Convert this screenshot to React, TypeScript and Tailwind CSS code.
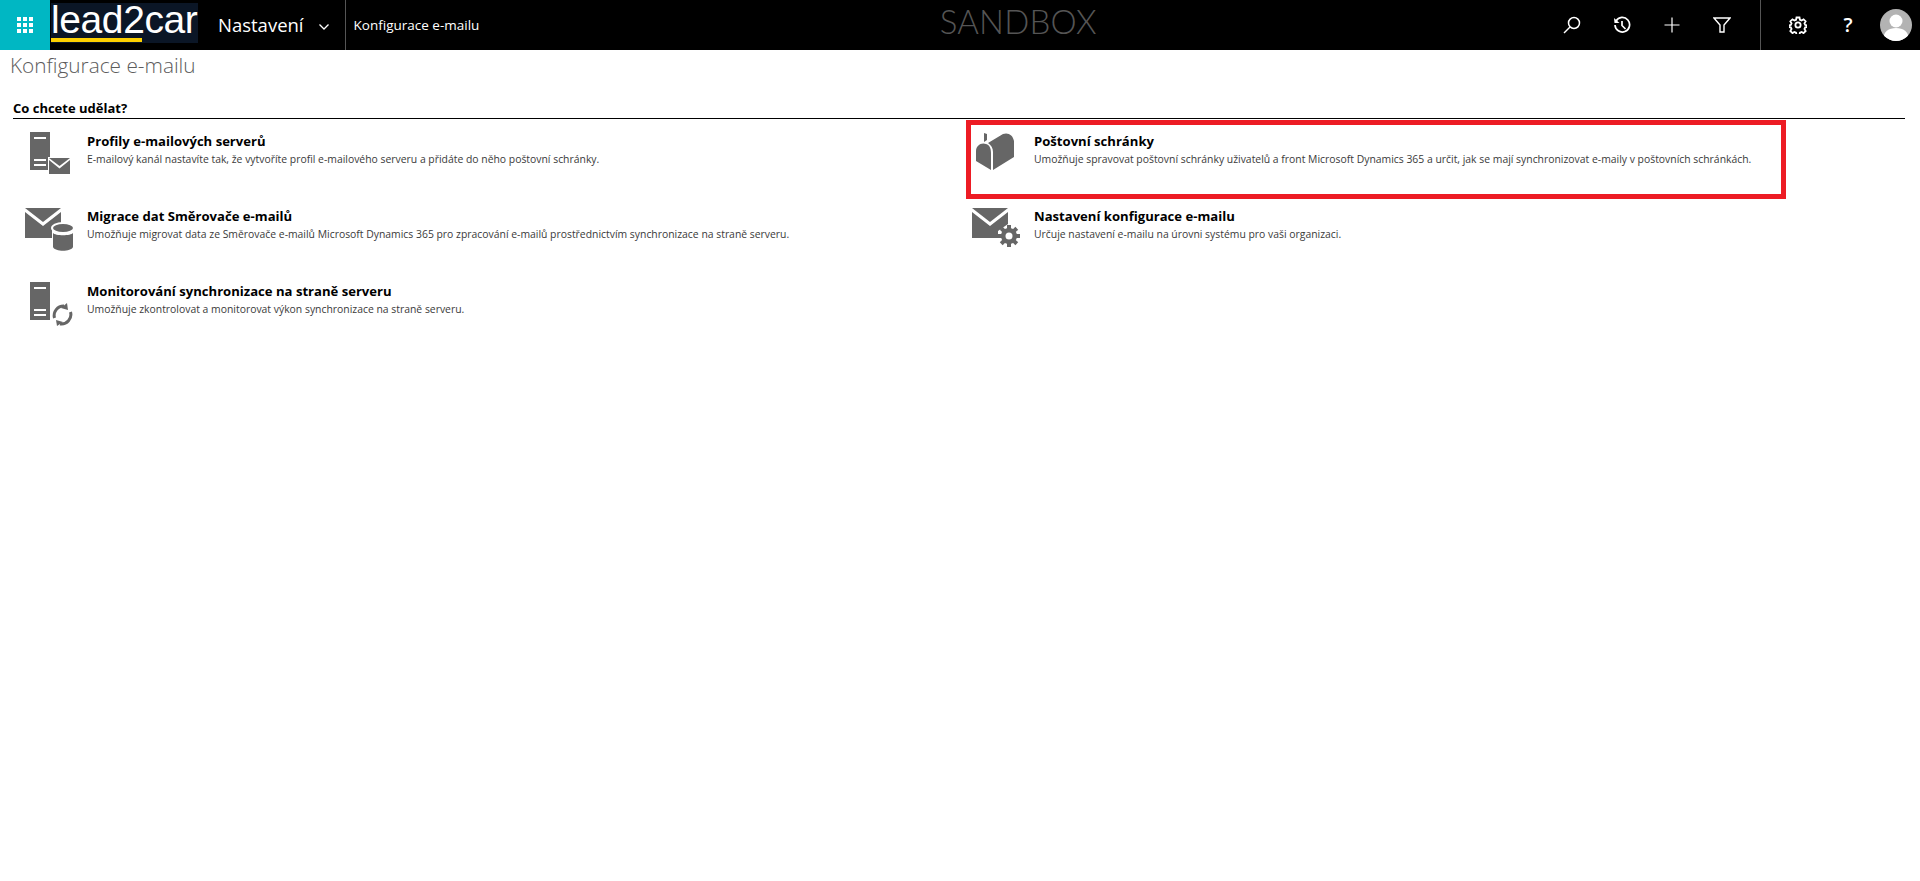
import React from "react";

const FONT = "font-['Open_Sans','Noto_Sans',sans-serif]";

function ServerBody() {
  return (
    <path
      fillRule="evenodd"
      d="M1 0H21V38H1ZM5 5V7H17V5ZM5 27V29H17V27ZM5 32V34H17V32Z"
      fill="#666"
    />
  );
}

function ProfileIcon() {
  return (
    <svg width="46" height="44" viewBox="0 0 46 44" className="shrink-0">
      <ServerBody />
      <path d="M19 25H41V42H19Z" fill="#fff" />
      <path d="M20 26H41L30.5 34Z" fill="#666" />
      <path d="M20 28V42H41V28L30.5 36.5Z" fill="#666" />
    </svg>
  );
}

function MigrationIcon() {
  return (
    <svg width="50" height="45" viewBox="0 0 50 45" className="shrink-0">
      <path d="M1 1H37L19 15Z" fill="#666" />
      <path d="M1 5V31H28V22L37 18V5L19 19Z" fill="#666" />
      <ellipse cx="39" cy="21" rx="12" ry="6" fill="#fff" />
      <ellipse cx="39" cy="21" rx="10" ry="4" fill="#666" />
      <path d="M29 26C31 29 47 29 49 26V40C47 45 31 45 29 40Z" fill="#666" />
    </svg>
  );
}

function MonitorIcon() {
  return (
    <svg width="46" height="44" viewBox="0 0 46 44" className="shrink-0">
      <ServerBody />
      <path d="M35 24A9.5 9.5 0 0 0 25.5 36" fill="none" stroke="#666" strokeWidth="3" />
      <path d="M32 26L39 28L38 21Z" fill="#666" />
      <path d="M31 42A9.5 9.5 0 0 0 41.5 30" fill="none" stroke="#666" strokeWidth="3" />
      <path d="M34 40L27 38L28 44Z" fill="#666" />
    </svg>
  );
}

function MailboxIcon() {
  return (
    <svg width="40" height="40" viewBox="0 0 40 40" className="shrink-0">
      <path d="M12 2V8L9 10V1Z" fill="#666" />
      <path d="M1 19C1 14 6 10 11 12C15 13 16 17 16 21V38L1 29Z" fill="#666" />
      <path d="M13 11L28 2C33 0 38 3 39 9V25L18 38V20C18 16 16 13 13 11Z" fill="#666" />
    </svg>
  );
}

function SettingsMailIcon() {
  return (
    <svg width="50" height="40" viewBox="0 0 50 40" className="shrink-0">
      <path d="M1 1H37L19 15Z" fill="#666" />
      <path d="M1 5V31H27V24L37 17V5L19 19Z" fill="#666" />
      <circle cx="38" cy="29" r="10" fill="#fff" />
      <g fill="#666">
        <rect x="36" y="18" width="4" height="22" />
        <rect x="27" y="27" width="22" height="4" />
        <rect x="36" y="18" width="4" height="22" transform="rotate(45 38 29)" />
        <rect x="36" y="18" width="4" height="22" transform="rotate(-45 38 29)" />
      </g>
      <circle cx="38" cy="29" r="8" fill="#666" />
      <circle cx="38" cy="29" r="3.5" fill="#fff" />
    </svg>
  );
}

function Tile({
  icon,
  title,
  desc,
  iconLeft,
  marked,
}: {
  icon: React.ReactNode;
  title: string;
  desc: string;
  iconLeft: string;
  marked?: boolean;
}) {
  return (
    <div className="relative flex h-[75px]">
      <div className={`w-[74px] pt-[13px] shrink-0 ${iconLeft}`}>{icon}</div>
      <div className="pt-[13px]">
        <div className="text-[13.1px] leading-[18px] font-bold text-black">{title}</div>
        <div className="text-[10.4px] leading-[18px] text-[#3a3a3a]">{desc}</div>
      </div>
      {marked && (
        <div className="absolute left-[6px] top-[1px] w-[820px] h-[79px] border-[5px] border-[#ed1c24]" />
      )}
    </div>
  );
}

export default function App() {
  return (
    <div className={`${FONT} min-h-screen bg-white`}>
      <header className="flex h-[50px] items-stretch bg-black text-white">
        <div className="flex w-[50px] shrink-0 items-center justify-center bg-[#00b7c3]">
          <div className="grid grid-cols-3 gap-[2px]">
            {Array.from({ length: 9 }).map((_, i) => (
              <div key={i} className="h-[4px] w-[4px] bg-white" />
            ))}
          </div>
        </div>
        <div className="ml-[1px] mt-[3px] h-[40px] w-[147px] shrink-0 bg-[#0b1626]">
          <div className="font-['Liberation_Sans',sans-serif] text-[39px] leading-[34px] tracking-[-0.4px] whitespace-nowrap">
            lead2car
          </div>
          <div className="mt-[1px] h-[4px] w-[91px] bg-[#fdd000]" />
        </div>
        <div className="ml-[20px] flex items-center text-[18.5px]">
          Nastavení
          <svg width="12" height="8" viewBox="0 0 12 8" className="ml-[14px] mt-[3px]">
            <path d="M1.5 1.5L6 6L10.5 1.5" fill="none" stroke="#fff" strokeWidth="1.3" />
          </svg>
        </div>
        <div className="ml-[15px] flex items-center border-l border-[#555] pl-[8px] text-[13.5px]">
          Konfigurace e-mailu
        </div>
        <div className="flex flex-1 justify-center pl-[10px]">
          <span className="font-['Lato',sans-serif] text-[33px] font-light leading-[42px] tracking-[0.2px] text-[#555]">SANDBOX</span>
        </div>
        <div className="flex items-center text-white">
          <div className="flex w-[50px] justify-center">
            <svg width="18" height="18" viewBox="0 0 18 18">
              <circle cx="11" cy="7" r="5.5" fill="none" stroke="#fff" strokeWidth="1.5" />
              <path d="M7 11L1 17" stroke="#fff" strokeWidth="1.5" />
            </svg>
          </div>
          <div className="flex w-[50px] justify-center">
            <svg width="18" height="18" viewBox="0 0 18 18">
              <path d="M3 5A7.3 7.3 0 1 1 2 9" fill="none" stroke="#fff" strokeWidth="1.7" />
              <path d="M1 2L1.5 7H6.5Z" fill="#fff" />
              <path d="M9 5V9.5L12.5 13" fill="none" stroke="#fff" strokeWidth="1.7" />
            </svg>
          </div>
          <div className="flex w-[50px] justify-center">
            <svg width="16" height="16" viewBox="0 0 16 16">
              <path d="M8 0.5V15.5M0.5 8H15.5" stroke="#fff" strokeWidth="1.2" />
            </svg>
          </div>
          <div className="flex w-[50px] justify-center">
            <svg width="18" height="16" viewBox="0 0 18 16">
              <path d="M1 1H17L11 8V15H7V8Z" fill="none" stroke="#fff" strokeWidth="1.4" />
            </svg>
          </div>
          <div className="ml-[13px] h-full border-l border-[#555]" />
          <div className="ml-[12px] flex w-[50px] justify-center">
            <svg width="18" height="18" viewBox="0 0 24 24" fill="none" stroke="#fff" strokeWidth="2.4">
              <circle cx="12" cy="12" r="3.5" />
              <path d="M10 2h4l.6 3 2.2 1 2.6-1.6 2.8 2.8-1.6 2.6 1 2.2 3 .6v2l-3 .6-1 2.2 1.6 2.6-2.8 2.8-2.6-1.6-2.2 1-.6 3h-4l-.6-3-2.2-1-2.6 1.6-2.8-2.8 1.6-2.6-1-2.2-3-.6v-2l3-.6 1-2.2-1.6-2.6 2.8-2.8 2.6 1.6 2.2-1z" />
            </svg>
          </div>
          <div className="flex w-[50px] justify-center text-[20px] font-semibold leading-none">?</div>
          <div className="ml-[7px] mr-[8px] h-[32px] w-[32px] overflow-hidden rounded-full bg-[#b3b3b3]">
            <svg width="32" height="32" viewBox="0 0 32 32">
              <circle cx="16" cy="12" r="6.5" fill="#fff" />
              <path d="M3 32C3 22 9 19 16 19C23 19 29 22 29 32Z" fill="#fff" />
            </svg>
          </div>
        </div>
      </header>

      <main>
        <h1 className="pl-[10px] pt-[2px] text-[20.8px] leading-[26px] font-light text-[#5c5c5c]">Konfigurace e-mailu</h1>
        <div className="ml-[13px] mr-[15px] mt-[19px] border-b border-black pt-[1px] text-[13px] leading-[20px] font-bold text-black">
          Co chcete udělat?
        </div>
        <div className="ml-[13px] grid grid-cols-[947px_1fr]">
          <div>
            <Tile
              iconLeft="pl-[16px]"
              icon={<ProfileIcon />}
              title="Profily e-mailových serverů"
              desc="E-mailový kanál nastavíte tak, že vytvoříte profil e-mailového serveru a přidáte do něho poštovní schránky."
            />
            <Tile
              iconLeft="pl-[11px]"
              icon={<MigrationIcon />}
              title="Migrace dat Směrovače e-mailů"
              desc="Umožňuje migrovat data ze Směrovače e-mailů Microsoft Dynamics 365 pro zpracování e-mailů prostřednictvím synchronizace na straně serveru."
            />
            <Tile
              iconLeft="pl-[16px]"
              icon={<MonitorIcon />}
              title="Monitorování synchronizace na straně serveru"
              desc="Umožňuje zkontrolovat a monitorovat výkon synchronizace na straně serveru."
            />
          </div>
          <div>
            <Tile
              marked
              iconLeft="pl-[15px]"
              icon={<MailboxIcon />}
              title="Poštovní schránky"
              desc="Umožňuje spravovat poštovní schránky uživatelů a front Microsoft Dynamics 365 a určit, jak se mají synchronizovat e-maily v poštovních schránkách."
            />
            <Tile
              iconLeft="pl-[11px]"
              icon={<SettingsMailIcon />}
              title="Nastavení konfigurace e-mailu"
              desc="Určuje nastavení e-mailu na úrovni systému pro vaši organizaci."
            />
          </div>
        </div>
      </main>
    </div>
  );
}
